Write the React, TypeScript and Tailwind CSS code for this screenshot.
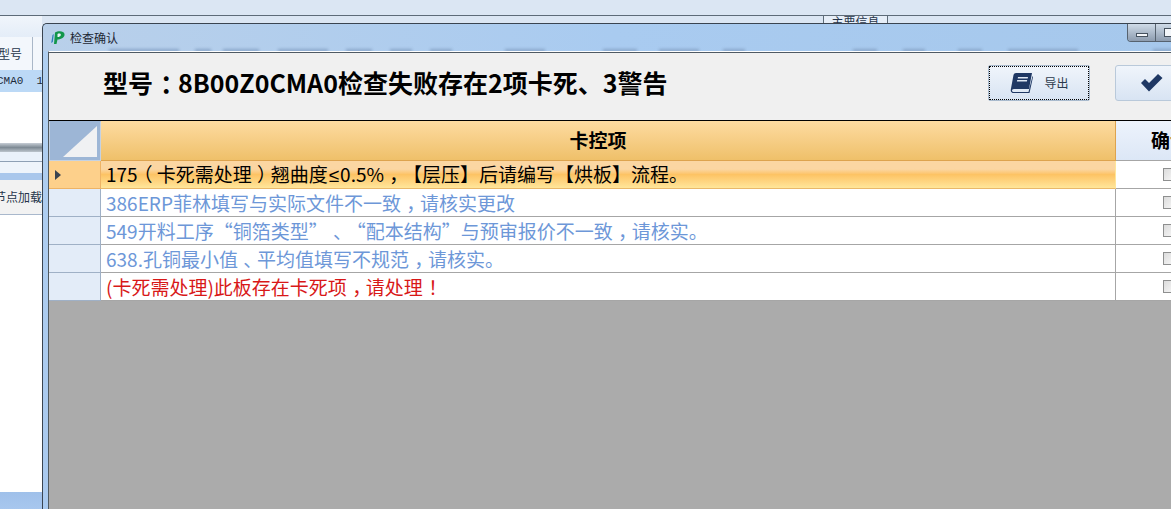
const cjk = "font-['Noto_Sans_CJK_SC','Noto_Sans',sans-serif] [text-spacing-trim:space-all]";

// half-width glyph plus padding: the source font centres this punctuation in its cell
const centred = "[font-feature-settings:'halt'] pl-[0.28em] pr-[0.22em]";

const rows = [
  { text: "175（卡死需处理）翘曲度≤0.5%，【层压】后请编写【烘板】流程。", color: "text-black", active: true },
  { text: "386ERP菲林填写与实际文件不一致，请核实更改", color: "text-[#6d97d8]" },
  { text: "549开料工序“铜箔类型”、“配本结构”与预审报价不一致，请核实。", color: "text-[#6d97d8]" },
  { text: "638.孔铜最小值、平均值填写不规范，请核实。", color: "text-[#6d97d8]" },
  { text: "(卡死需处理)此板存在卡死项，请处理！", color: "text-[#d81818]" },
];

// streaks of the blurred window behind the glass title bar
const streaks = [
  { left: 26, width: 70 }, { left: 112, width: 16 }, { left: 140, width: 36 }, { left: 195, width: 50 },
  { left: 263, width: 26 }, { left: 307, width: 22 }, { left: 347, width: 22 }, { left: 422, width: 40 },
  { left: 520, width: 34 }, { left: 576, width: 40 }, { left: 640, width: 22 }, { left: 770, width: 24 },
  { left: 820, width: 22 }, { left: 875, width: 24 }, { left: 925, width: 70 }, { left: 1070, width: 34 },
];

function Text({ value }: { value: string }) {
  return (
    <>
      {value.split(/([，：！、（）≤])/).map((part, i) => {
        if (part === "≤") return <span key={i} className="font-['Liberation_Sans',sans-serif] px-[1px]">{part}</span>;
        if (/^[，：！、（）]$/.test(part)) return <span key={i} className={centred}>{part}</span>;
        return <span key={i}>{part}</span>;
      })}
    </>
  );
}

function Logo() {
  return (
    <svg width="16" height="16" viewBox="0 0 16 16">
      <path d="M5 2.5 C8 0.5 14 0.5 14.5 4 C15 8 10 9.5 7.5 9.5 L6.5 14 L4 14 Z" fill="#12964a" />
      <path d="M7.5 4 C9 3.2 11 3.5 10.8 5 C10.6 6.5 9 7 7.5 7 Z" fill="#e8f2f8" />
      <path d="M2.5 5 L3.8 4 L2.8 12 L1.2 13 Z" fill="#2c7fb8" />
    </svg>
  );
}

function BookIcon() {
  return (
    <svg width="24" height="22" viewBox="0 0 24 22">
      <path d="M6 1 H22 L19 17 H4 C2.5 17 2 18 2 18.5 C2 19.5 3 20 4 20 H18.5 L22.5 4 L23 5 L19.5 21 H4 C1.5 21 0.5 19.5 0.8 17.5 L3.5 3 C3.8 1.8 4.8 1 6 1 Z" fill="#1f3864" />
      <path d="M8 5 H18 L17.7 6.6 H7.7 Z M7.2 8 H17.2 L16.9 9.4 H6.9 Z" fill="#dfe8f4" />
    </svg>
  );
}

function CheckIcon() {
  return (
    <svg width="22" height="18" viewBox="0 0 22 18">
      <polygon points="0,9 4,5 8,9 17,0 21.5,4 8,17.5" fill="#1f3864" />
    </svg>
  );
}

function LeftPanel() {
  return (
    <div className="flex flex-col flex-1 w-[42px] overflow-hidden">
      <div className="h-[21px] bg-gradient-to-b from-[#f0f5fb] to-[#e4edf8]" />
      <div className="h-[33px] flex items-center bg-[#f3f7fc]">
        <div className="w-[33px] h-full flex items-center justify-end pr-[10px] border-r border-[#a9b7c8] text-[12px] text-[#26354a] overflow-hidden whitespace-nowrap">
          型号
        </div>
      </div>
      <div className="h-[22px] flex items-center bg-[#bcd9f6] text-[11px] text-[#1c2a3a] whitespace-nowrap overflow-hidden font-['Liberation_Mono',monospace]">
        <span className="-ml-[3px]">CMA0&nbsp;&nbsp;10</span>
      </div>
      <div className="h-[51px] bg-white" />
      <div className="h-[9px] bg-gradient-to-b from-[#c7ced6] via-[#7f8b95] to-[#bcc5cd]" />
      <div className="h-[10px] bg-[#eaf2fb] border-b border-[#8ea0b5]" />
      <div className="h-[11px] bg-[#eef4fb]" />
      <div className="h-[7px] bg-[#a9c7ec]" />
      <div className="h-[35px] flex items-center justify-end bg-[#f2f2f2] border-b border-[#a9b8cc] text-[12px] text-[#26354a] whitespace-nowrap overflow-hidden">
        节点加载
      </div>
      <div className="flex-1 bg-white" />
      <div className="h-[17px] bg-gradient-to-b from-[#9fc0ea] to-[#a8c7ee]" />
    </div>
  );
}

function Dialog() {
  return (
    <div className="absolute left-[42px] top-[23px] w-[1140px] h-[486px] flex flex-col bg-gradient-to-b from-[#b1d0f1] to-[#a9c9ee] border-l border-t border-[#3a4450] rounded-tl-[5px]">
      <div className="h-[27px] flex items-center pl-[7px] gap-[4px] bg-gradient-to-r from-[#b9d0ea] via-[#a9cbf0] to-[#a6c8ec] relative shrink-0 overflow-hidden rounded-tl-[5px]">
        <Logo />
        <span className="text-[12px] leading-none text-[#1d2733]">检查确认</span>
        {streaks.map((s) => (
          <div
            key={s.left}
            className="absolute bottom-[-1px] h-[3px] bg-[#88a5c8] blur-[1.5px]"
            style={{ left: s.left + 40, width: s.width }}
          />
        ))}
        <div className="absolute left-[1084px] top-0 h-[18px] flex border border-t-0 border-[#56626f] rounded-b-[4px] overflow-hidden">
          <div className="w-[28px] flex items-center justify-center border-r border-[#56626f] bg-gradient-to-b from-[#cfdbe8] to-[#8d9caf]">
            <div className="w-[12px] h-[4px] mt-[4px] bg-[#f3f6fa] border border-[#46525f]" />
          </div>
          <div className="w-[28px] flex items-center justify-center bg-gradient-to-b from-[#cfdbe8] to-[#8d9caf]">
            <div className="w-[12px] h-[9px] bg-[#f3f6fa] border border-[#46525f]" />
          </div>
        </div>
      </div>
      <div className="flex flex-1 min-h-0 pl-[5px]">
        <div className={`flex flex-col flex-1 min-w-0 border-l border-t border-[#50595f] border-t-white bg-[#ababab] ${cjk}`}>
          <div className="h-[68px] shrink-0 flex items-center bg-[#f0f0f0] pl-[54px] pb-[8px] border-t border-[#4f5a64]">
            <h1 className="font-bold text-[25px] leading-none text-black whitespace-nowrap">
              型号<span className={centred}>：</span>8B00Z0CMA0检查失败存在2项卡死、3警告
            </h1>
            <button className="ml-[321px] w-[102px] h-[36px] shrink-0 flex items-center justify-center gap-[10px] rounded-[2px] border border-[#a9bacd] bg-gradient-to-b from-[#f0f5fb] to-[#d8e4f3] outline-1 outline-dotted outline-black -outline-offset-2">
              <BookIcon />
              <span className="text-[12px] text-[#2c3a4c]">导出</span>
            </button>
            <button className="ml-[25px] w-[80px] h-[36px] shrink-0 flex items-center pl-[25px] rounded-[3px] border border-[#b9c9da] bg-gradient-to-b from-[#f0f5fb] to-[#d8e4f3]">
              <CheckIcon />
            </button>
          </div>

          <div className="border-t border-black flex h-[41px] shrink-0">
            <div className="w-[52px] shrink-0 bg-[#9db6d6] border border-[#c5d2e2] border-t-[#9db6d6] p-[3px] flex items-end justify-end">
              <svg width="34" height="31" viewBox="0 0 34 31" className="block">
                <polygon points="34,0 34,31 0,31" fill="#f0f1f3" />
              </svg>
            </div>
            <div className="w-[1015px] shrink-0 flex items-center justify-center pr-[20px] bg-gradient-to-b from-[#fddba0] to-[#efc069] border-r border-[#dda34e] border-b font-bold text-[19px] text-black">
              卡控项
            </div>
            <div className="flex-1 bg-gradient-to-b from-[#edf3fc] to-[#dce7f6] border-b border-[#a6a6a6] pl-[35px] flex items-center font-bold text-[19px] text-black whitespace-nowrap overflow-hidden">
              确认
            </div>
          </div>

          {rows.map((row) => (
            <div key={row.text} className="flex h-[28px] shrink-0">
              <div
                className={`w-[52px] shrink-0 flex items-center pl-[6px] border-r border-b ${
                  row.active ? "bg-[#fdd08b] border-[#eeb365]" : "bg-[#e3ecf8] border-[#9fb0c6]"
                }`}
              >
                {row.active && (
                  <div className="w-0 h-0 border-y-[5px] border-y-transparent border-l-[6px] border-l-[#39434f]" />
                )}
              </div>
              <div
                className={`w-[1015px] shrink-0 flex items-center pl-[5px] border-r border-b text-[19px] leading-none whitespace-nowrap ${row.color} ${
                  row.active
                    ? "bg-gradient-to-b from-[#fbd6a2] from-30% via-[#fdc364] via-50% to-[#ffe69a] border-[#ffe69a] border-b-[#e9b86a]"
                    : "bg-white border-[#a6a6a6]"
                }`}
              >
                <span><Text value={row.text} /></span>
              </div>
              <div className="flex-1 bg-white border-b border-[#a6a6a6] pl-[47px] flex items-center">
                <div className="w-[13px] h-[13px] border border-[#8e8f8f] bg-gradient-to-br from-[#dcdcdc] to-[#f8f8f8]" />
              </div>
            </div>
          ))}

          <div className="flex-1 bg-[#ababab]" />
        </div>
      </div>
    </div>
  );
}

export default function App() {
  return (
    <div className={`relative w-[1171px] h-[509px] overflow-hidden flex flex-col bg-[#dbe6f3] ${cjk}`}>
      <div className="h-[16px] shrink-0 bg-[#dbe6f3] border-b border-[#5d6b78]" />
      <div className="absolute left-[823px] top-[16px] w-[65px] h-[7px] overflow-hidden border-x border-[#5d6b78] text-[12px] leading-none text-center text-[#26354a] bg-[#e6eef8]">
        主要信息
      </div>
      <LeftPanel />
      <Dialog />
    </div>
  );
}
